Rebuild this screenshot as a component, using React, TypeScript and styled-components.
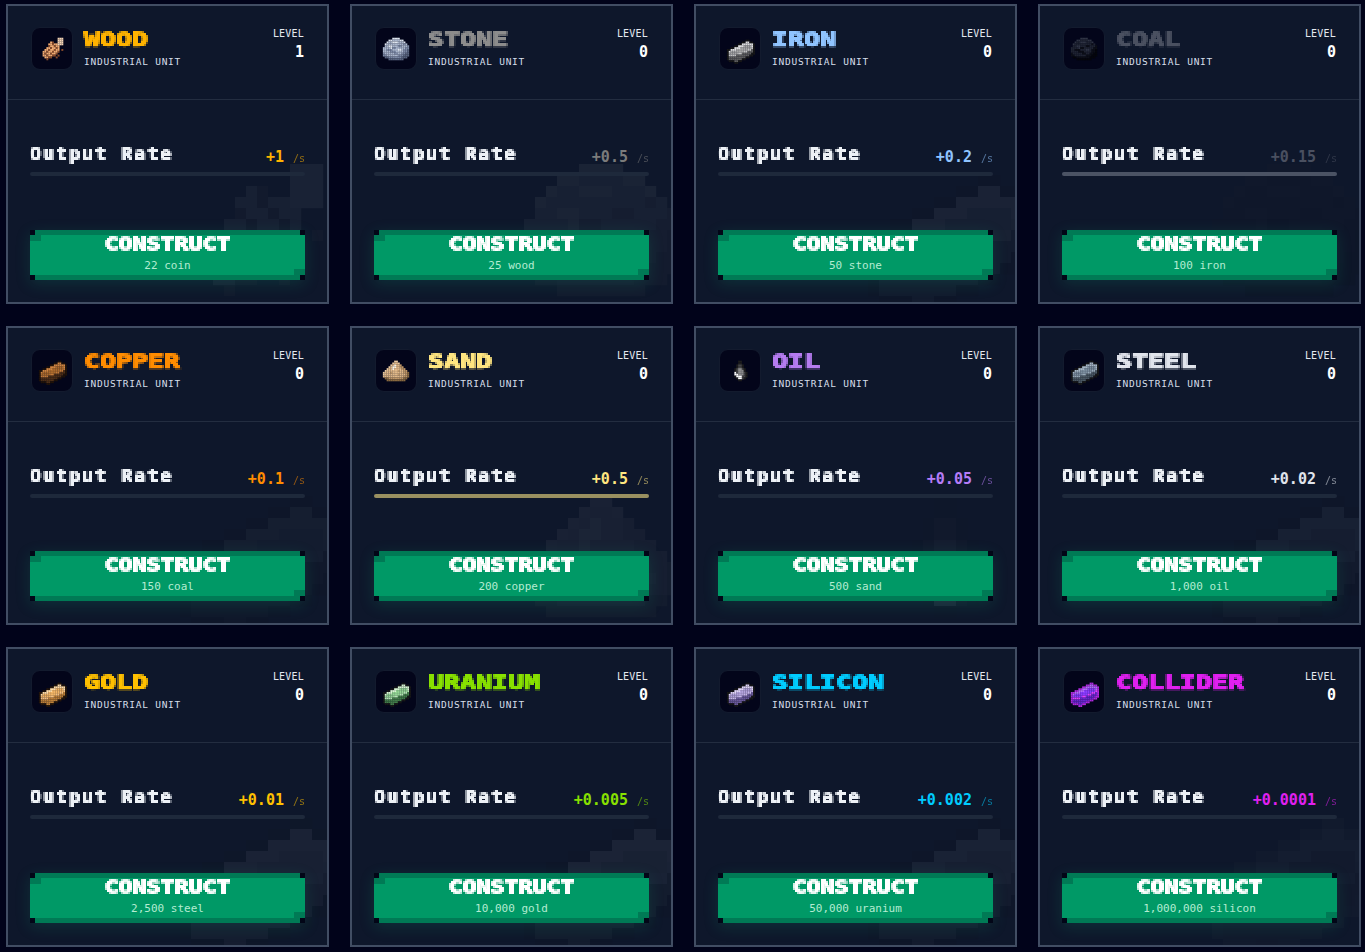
import React from "react";
import styled, { createGlobalStyle } from "styled-components";

const Global = createGlobalStyle`
  html, body { margin: 0; background: #01031a; }
  * { box-sizing: border-box; }
`;

const mono = `"DejaVu Sans Mono", "Liberation Mono", monospace`;

const INGOT = [
  "................",
  "................",
  "................",
  "...........oo...",
  ".........ooaaoo.",
  ".......ooaaaaaao",
  ".....ooaaabbbbao",
  "...ooaaabbbbbbdo",
  ".ooaaabbbbbbddco",
  ".oabbbbbbbddccco",
  ".obbbbbddcccccoo",
  ".oddddcccccccoo.",
  ".occcccccccoo...",
  ".occcccccoo.....",
  "..oooccoo.......",
  ".....oo.........",
];
const ROCK = [
  "................",
  "................",
  "......aaaa......",
  "....aabbbbaa....",
  "...abbaaabbba...",
  "..abbbbbbbbbcb..",
  "..bbaabbbccbbbc.",
  ".bbbbaccbbbbbcc.",
  ".bbcccbbbaabccd.",
  ".bbbbcccbbbbccd.",
  ".cbbbbbccbbccdd.",
  ".ccbbbbbbcccddd.",
  "..ddcccccccddd..",
  "....dddddddd....",
  "................",
  "................",
];
const LOG = [
  "................",
  "................",
  "...........aaa..",
  "...........aaa..",
  ".......bc..aaa..",
  "......bbcbbaaa..",
  "......cbbcbb....",
  ".....bbcbbcb....",
  "....bbcbbcbb.c..",
  "...bbcbbcbbc....",
  "...bcbbcbbc.....",
  "...bbcbbcc.c....",
  "....bbcc..c.....",
  ".....c..........",
  "................",
  "................",
];
const PILE = [
  "................",
  "................",
  "................",
  ".......aa.......",
  "......abba......",
  ".....abwbbc.....",
  "....abwwbbcc....",
  "...abbwbbbbcc...",
  "..abbbbbbcbbcc..",
  ".abbbcbbbbbbccd.",
  ".abbbbbbbcbbbcd.",
  ".bbbbbbbbbbbccd.",
  "..ddccccccccdd..",
  "...dddddddddd...",
  "................",
  "................",
];
const DROP = [
  "................",
  "................",
  "................",
  ".......aa.......",
  ".......aa.......",
  "......abba......",
  "......abba......",
  ".....abccba.....",
  ".....abccca.....",
  ".....wbcccba....",
  ".....wwcccba....",
  ".....awwwbba....",
  "......awwba.....",
  ".......aa.......",
  "................",
  "................",
];

type Palette = Record<string, string>;
type Item = {
  name: string;
  color: string;
  rateColor?: string;
  level: number;
  rate: string;
  cost: string;
  sprite: string[];
  palette: Palette;
  fill?: string;
};

const bar = (a: string, b: string, c: string, d: string, o = "#161616"): Palette => ({ a, b, c, d, o });

const items: Item[] = [
  { name: "WOOD", color: "#ffb300", level: 1, rate: "+1", cost: "22 coin", sprite: LOG, palette: { a: "#f6d6b6", b: "#f2ac72", c: "#8a4c2a" } },
  { name: "STONE", color: "#8c8c8c", rateColor: "#7b7b7b", level: 0, rate: "+0.5", cost: "25 wood", sprite: ROCK, palette: { a: "#dfe6f0", b: "#aab6cc", c: "#7d8aa6", d: "#5a6680" } },
  { name: "IRON", color: "#90c4ff", level: 0, rate: "+0.2", cost: "50 stone", sprite: INGOT, palette: bar("#e0e0e0", "#a6a6a6", "#5f5f5f", "#c4c4c4") },
  { name: "COAL", color: "#4a5060", level: 0, rate: "+0.15", cost: "100 iron", sprite: ROCK, palette: { a: "#2f3444", b: "#1f2331", c: "#0c0e16", d: "#05060a" }, fill: "#717786" },
  { name: "COPPER", color: "#ff8c00", level: 0, rate: "+0.1", cost: "150 coal", sprite: INGOT, palette: bar("#d08540", "#ab6a2c", "#4e2f16", "#c27a38", "#1f1208") },
  { name: "SAND", color: "#ffe680", level: 0, rate: "+0.5", cost: "200 copper", sprite: PILE, palette: { a: "#e8c8a0", b: "#e0b888", c: "#c09868", d: "#8a6a40", w: "#fff4e0" }, fill: "#ffe680" },
  { name: "OIL", color: "#b57cf0", rateColor: "#b57cf8", level: 0, rate: "+0.05", cost: "500 sand", sprite: DROP, palette: { a: "#1d1d1d", b: "#444444", c: "#8a8a8a", w: "#ffffff" } },
  { name: "STEEL", color: "#e0e4ec", level: 0, rate: "+0.02", cost: "1,000 oil", sprite: INGOT, palette: bar("#a8b8c6", "#7c8e9e", "#4c5a64", "#98aab8") },
  { name: "GOLD", color: "#ffc000", level: 0, rate: "+0.01", cost: "2,500 steel", sprite: INGOT, palette: bar("#ffdca6", "#f2b566", "#bd8038", "#f5c080", "#24160a") },
  { name: "URANIUM", color: "#88e000", level: 0, rate: "+0.005", cost: "10,000 gold", sprite: INGOT, palette: bar("#d8f6d2", "#93d494", "#447e4a", "#b4e4b4") },
  { name: "SILICON", color: "#00ccff", level: 0, rate: "+0.002", cost: "50,000 uranium", sprite: INGOT, palette: bar("#e0d4f6", "#b3a3dc", "#6c5c9c", "#c8b8ea") },
  { name: "COLLIDER", color: "#e020f0", level: 0, rate: "+0.0001", cost: "1,000,000 silicon", sprite: INGOT, palette: bar("#b468ff", "#8a3cff", "#6a28d0", "#e040ff", "#b028e0") },
];

const Sprite = ({ rows, palette, className }: { rows: string[]; palette: Palette; className?: string }) => (
  <svg className={className} viewBox="0 0 16 16" aria-hidden="true">
    {rows.flatMap((row, y) =>
      row.split("").map((ch, x) =>
        palette[ch] ? <rect key={`${x}-${y}`} x={x} y={y} width={1.02} height={1.02} fill={palette[ch]} /> : null
      )
    )}
  </svg>
);

const FilterDefs = styled.svg`
  position: absolute;
  width: 0;
  height: 0;
`;

const Grid = styled.main`
  display: grid;
  grid-template-columns: repeat(4, 323px);
  grid-auto-rows: 299.8px;
  column-gap: 21px;
  row-gap: 21.8px;
  padding: 4px 3px 5px 6px;
  min-height: 952px;
  background: #01031a;
`;

const Card = styled.article`
  position: relative;
  display: flex;
  flex-direction: column;
  overflow: hidden;
  background: #0e172b;
  border: 2px solid #414d63;
`;

const Watermark = styled(Sprite)`
  position: absolute;
  right: -18px;
  bottom: -16px;
  width: 176px;
  height: 176px;
  opacity: 0.055;
  filter: grayscale(1) blur(0.6px);
`;

const Header = styled.header`
  position: relative;
  display: flex;
  align-items: flex-start;
  flex: none;
  height: 94px;
  padding: 21px 23px 0 23px;
  border-bottom: 1px solid #232d40;
`;

const IconBox = styled.div`
  display: flex;
  flex: none;
  align-items: center;
  justify-content: center;
  width: 42px;
  height: 43px;
  border: 1px solid #131b2e;
  border-radius: 9px;
  background: #03051a;
`;

const Icon = styled(Sprite)`
  width: 30px;
  height: 30px;
`;

const Names = styled.div`
  flex: 1;
  margin-left: 11px;
`;

const Pixel = styled.div`
  filter: url(#pixelate);
`;

const TitleWrap = styled(Pixel)`
  margin-top: 1px;
  height: 23px;
`;

const Title = styled.h2<{ $color: string }>`
  margin: 0;
  font: bold 20px/23px ${mono};
  color: ${(p) => p.$color};
  transform: scaleX(1.33);
  transform-origin: left;
  -webkit-text-stroke: 0.4px ${(p) => p.$color};
  white-space: nowrap;
`;

const Sub = styled.div`
  margin-top: 5px;
  font: 9.5px/12px ${mono};
  letter-spacing: 0.75px;
  color: #d6dfea;
  white-space: nowrap;
`;

const LevelBox = styled.div`
  display: flex;
  flex-direction: column;
  align-items: flex-end;
`;

const LevelLabel = styled.div`
  font: 10px/13px ${mono};
  letter-spacing: 0.2px;
  color: #e4e9f0;
`;

const LevelValue = styled.div`
  margin-top: 3px;
  font: bold 15px/18px ${mono};
  color: #ffffff;
`;

const Body = styled.section`
  position: relative;
  display: flex;
  flex: 1;
  flex-direction: column;
  padding: 44px 22px 22px;
`;

const RateRow = styled.div`
  display: flex;
  align-items: flex-end;
  justify-content: space-between;
  height: 24px;
`;

const RateWrap = styled(Pixel)`
  flex: 1;
  align-self: flex-start;
  height: 24px;
`;

const RateLabel = styled.div`
  font: bold 17px/20px ${mono};
  letter-spacing: 1.6px;
  color: #edf1f6;
  transform: scaleX(1.1);
  transform-origin: left;
  white-space: nowrap;
`;

const RateValue = styled.span<{ $color: string }>`
  font: bold 15px/18px ${mono};
  color: ${(p) => p.$color};
  white-space: nowrap;
`;

const Per = styled.span`
  margin-left: 9px;
  font: 10px/18px ${mono};
  font-weight: normal;
  opacity: 0.55;
`;

const Track = styled.div`
  height: 4px;
  margin-top: 4px;
  border-radius: 2px;
  overflow: hidden;
  background: #1e293b;
`;

const Fill = styled.div<{ $color: string }>`
  height: 100%;
  background: ${(p) => p.$color};
  opacity: 0.55;
`;

const bg = "#020617";
const tone = "#007a55";
const solid = (c: string) => `linear-gradient(${c}, ${c})`;

const Construct = styled.button`
  display: flex;
  flex-direction: column;
  align-items: center;
  height: 50px;
  margin-top: auto;
  padding: 5px 0 0;
  border: 0;
  color: #fff;
  box-shadow: 0 4px 16px rgba(16, 185, 129, 0.16);
  background:
    ${solid(bg)} left top / 5px 5px no-repeat,
    ${solid(bg)} right top / 5px 5px no-repeat,
    ${solid(bg)} left bottom / 5px 5px no-repeat,
    ${solid(bg)} right bottom / 5px 5px no-repeat,
    ${solid(tone)} left 5px / 11px 6px no-repeat,
    ${solid(tone)} right bottom 5px / 11px 6px no-repeat,
    ${solid(tone)} left top / 100% 5px no-repeat,
    ${solid(tone)} left bottom / 100% 5px no-repeat,
    #009966;
`;

const LabelWrap = styled(Pixel)`
  width: 100%;
  height: 18px;
`;

const ConstructLabel = styled.div`
  font: bold 17px/18px ${mono};
  text-align: center;
  transform: scaleX(1.37);
  -webkit-text-stroke: 0.3px #fff;
`;

const Cost = styled.span`
  margin-top: 5px;
  font: 11px/16px ${mono};
  color: #b4ecd2;
`;

export default function App() {
  return (
    <>
      <Global />
      <FilterDefs aria-hidden="true">
        <filter id="pixelate" x="0" y="0" width="100%" height="100%" colorInterpolationFilters="sRGB">
          <feFlood x="0" y="0" width="1" height="1" floodColor="#000" />
          <feComposite width="2" height="2" />
          <feTile result="grid" />
          <feComposite in="SourceGraphic" in2="grid" operator="in" />
          <feMorphology operator="dilate" radius="1" />
        </filter>
      </FilterDefs>
      <Grid>
        {items.map((it) => (
          <Card key={it.name}>
            <Watermark rows={it.sprite} palette={it.palette} />
            <Header>
              <IconBox>
                <Icon rows={it.sprite} palette={it.palette} />
              </IconBox>
              <Names>
                <TitleWrap>
                  <Title $color={it.color}>{it.name}</Title>
                </TitleWrap>
                <Sub>INDUSTRIAL UNIT</Sub>
              </Names>
              <LevelBox>
                <LevelLabel>LEVEL</LevelLabel>
                <LevelValue>{it.level}</LevelValue>
              </LevelBox>
            </Header>
            <Body>
              <RateRow>
                <RateWrap>
                  <RateLabel>Output Rate</RateLabel>
                </RateWrap>
                <RateValue $color={it.rateColor ?? it.color}>
                  {it.rate}
                  <Per>/s</Per>
                </RateValue>
              </RateRow>
              <Track>
                <Fill $color={it.fill ?? it.color} style={{ width: it.fill ? "100%" : "0%" }} />
              </Track>
              <Construct type="button">
                <LabelWrap>
                  <ConstructLabel>CONSTRUCT</ConstructLabel>
                </LabelWrap>
                <Cost>{it.cost}</Cost>
              </Construct>
            </Body>
          </Card>
        ))}
      </Grid>
    </>
  );
}
